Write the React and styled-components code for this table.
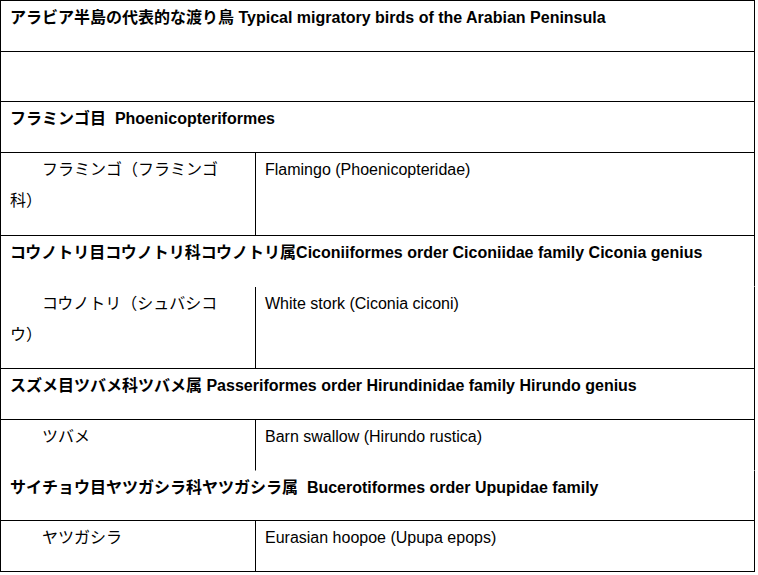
import React from "react";
import styled, { createGlobalStyle } from "styled-components";

const GlobalStyle = createGlobalStyle`
  *, *::before, *::after {
    box-sizing: border-box;
  }
  html, body {
    margin: 0;
    padding: 0;
    background: #fff;
  }
  body {
    font-family: "Liberation Sans", Arial, "Noto Sans CJK JP", sans-serif;
    color: #000;
  }
`;

// one entry per table row; "open" rows have no ruled line under them
const rows = [
  { type: "head", text: "アラビア半島の代表的な渡り鳥 Typical migratory birds of the Arabian Peninsula" },
  { type: "head", text: "" },
  { type: "head", text: "フラミンゴ目\u00a0 Phoenicopteriformes" },
  { type: "pair", ja: "フラミンゴ（フラミンゴ科）", en: "Flamingo (Phoenicopteridae)" },
  { type: "head", text: "コウノトリ目コウノトリ科コウノトリ属Ciconiiformes order Ciconiidae family Ciconia genius", open: true },
  { type: "pair", ja: "コウノトリ（シュバシコウ）", en: "White stork (Ciconia ciconi)" },
  { type: "head", text: "スズメ目ツバメ科ツバメ属 Passeriformes order Hirundinidae family Hirundo genius" },
  { type: "pair", ja: "ツバメ", en: "Barn swallow (Hirundo rustica)", open: true },
  { type: "head", text: "サイチョウ目ヤツガシラ科ヤツガシラ属\u00a0 Bucerotiformes order Upupidae family" },
  { type: "pair", ja: "ヤツガシラ", en: "Eurasian hoopoe (Upupa epops)" },
];

function App() {
  return (
    <>
      <GlobalStyle />
      <Sheet>
        {rows.map((r, i) =>
          r.type === "head" ? (
            <HeadCell key={i} $open={r.open}>
              {r.text}
            </HeadCell>
          ) : (
            <React.Fragment key={i}>
              <NameCell $open={r.open}>{r.ja}</NameCell>
              <Cell $open={r.open}>{r.en}</Cell>
            </React.Fragment>
          )
        )}
      </Sheet>
    </>
  );
}

export default App;

const Sheet = styled.div`
  display: grid;
  grid-template-columns: 255px 499px;
  grid-template-rows: 51px 50px 51px 83px 51px 82px 51px 51px 50px 51px;
  width: 755px;
  border-top: 1px solid #000;
  border-left: 1px solid #000;
`;

const Cell = styled.div`
  padding: 1px 10px 0 9px;
  font-size: 16px;
  line-height: 31px;
  border-right: 1px solid #000;
  border-bottom: 1px solid ${(p) => (p.$open ? "transparent" : "#000")};
`;

const HeadCell = styled(Cell)`
  grid-column: 1 / -1;
  font-weight: bold;
  white-space: nowrap;
`;

const NameCell = styled(Cell)`
  padding-right: 24px;
  text-indent: 32px;
`;
